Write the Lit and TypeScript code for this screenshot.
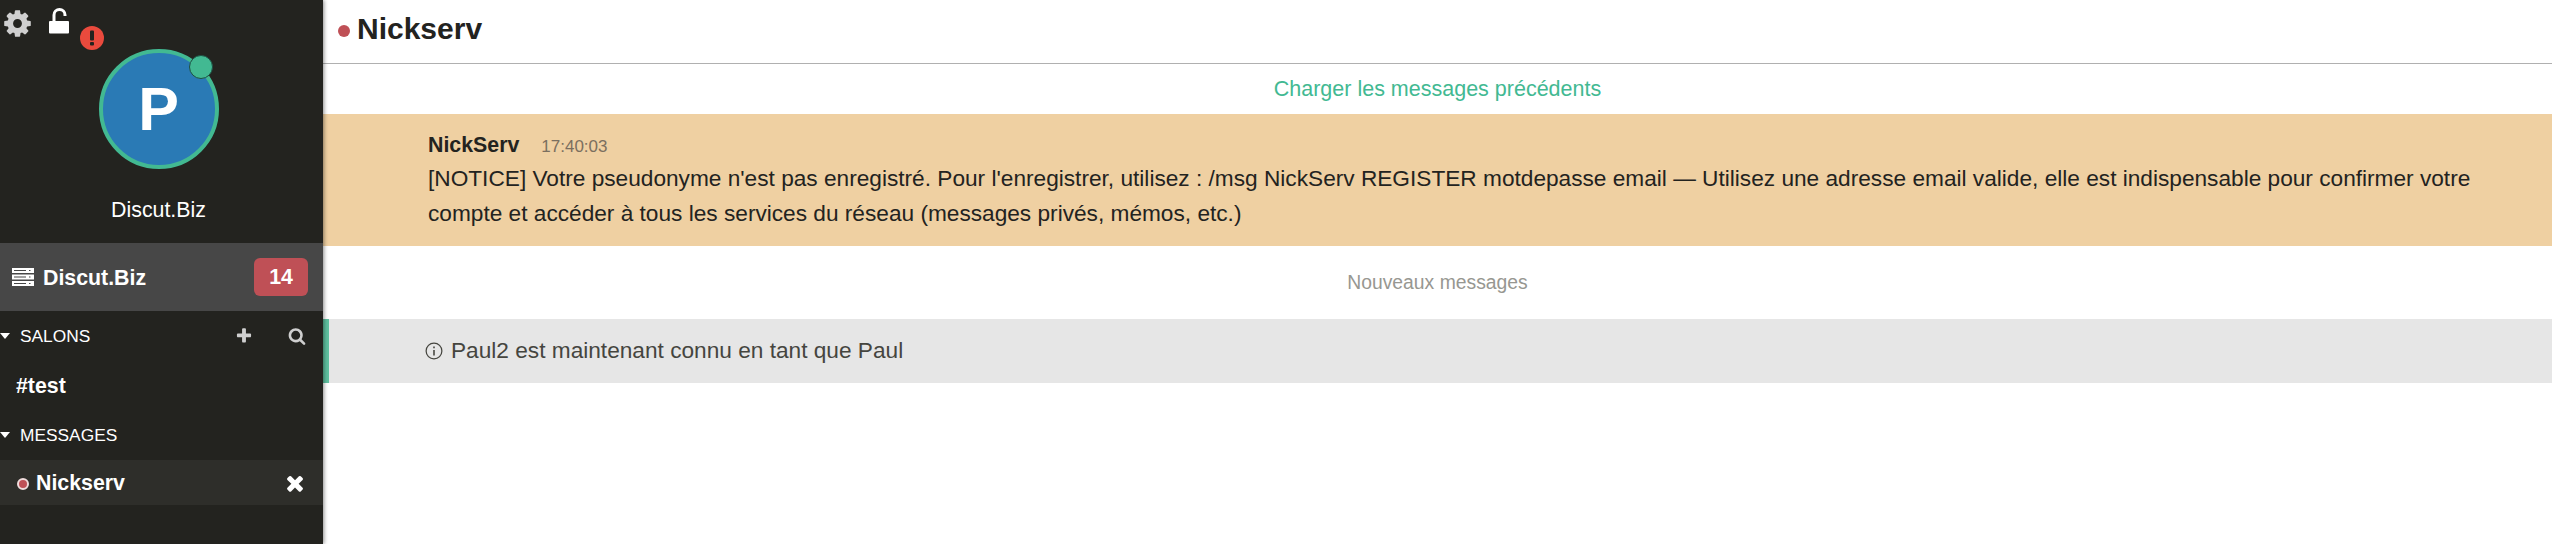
import { LitElement, html, css, svg } from 'lit';
import { customElement } from 'lit/decorators.js';

const GEAR = svg`<path d="M1152 896q0-106-75-181t-181-75-181 75-75 181 75 181 181 75 181-75 75-181zm512-109v222q0 12-8 23t-20 13l-185 28q-19 54-39 91 35 50 107 138 10 12 10 25t-9 23q-27 37-99 108t-94 71q-12 0-26-9l-138-108q-44 23-91 38-16 136-29 186-7 28-36 28h-222q-14 0-24.5-8.5t-11.5-21.5l-28-184q-49-16-90-37l-141 107q-10 9-25 9-14 0-25-11-126-114-165-168-7-10-7-23 0-12 8-23 15-21 51-66.5t54-70.5q-27-50-41-99l-183-27q-13-2-21-12.5t-8-23.5v-222q0-12 8-23t19-13l186-28q14-46 39-92-40-57-107-138-10-12-10-24 0-10 9-23 26-36 98.5-107.5t94.5-71.5q13 0 26 10l138 107q44-23 91-38 16-136 29-186 7-28 36-28h222q14 0 24.5 8.5t11.5 21.5l28 184q49 16 90 37l142-107q9-9 24-9 13 0 25 10 129 119 165 170 7 8 7 22 0 12-8 23-15 21-51 66.5t-54 70.5q26 50 41 98l183 28q13 2 21 12.5t8 23.5z"/>`;
const SEARCH = svg`<path d="M1216 832q0-185-131.5-316.5t-316.5-131.5-316.5 131.5-131.5 316.5 131.5 316.5 316.5 131.5 316.5-131.5 131.5-316.5zm512 832q0 52-38 90t-90 38q-54 0-90-38l-343-342q-179 124-399 124-143 0-273.5-55.5t-225-150-150-225-55.5-273.5 55.5-273.5 150-225 225-150 273.5-55.5 273.5 55.5 225 150 150 225 55.5 273.5q0 220-124 399l343 343q37 37 37 90z"/>`;
const PLUS = svg`<path d="M1600 736v192q0 40-28 68t-68 28h-416v416q0 40-28 68t-68 28h-192q-40 0-68-28t-28-68v-416h-416q-40 0-68-28t-28-68v-192q0-40 28-68t68-28h416v-416q0-40 28-68t68-28h192q40 0 68 28t28 68v416h416q40 0 68 28t28 68z"/>`;
const TIMES = svg`<path d="M1490 1322q0 40-28 68l-136 136q-28 28-68 28t-68-28l-294-294-294 294q-28 28-68 28t-68-28l-136-136q-28-28-28-68t28-68l294-294-294-294q-28-28-28-68t28-68l136-136q28-28 68-28t68 28l294 294 294-294q28-28 68-28t68 28l136 136q28 28 28 68t-28 68l-294 294 294 294q28 28 28 68z"/>`;

@customElement('app-root')
export class AppRoot extends LitElement {
  static override styles = css`
    :host {
      display: flex;
      width: 100%;
      height: 544px;
      overflow: hidden;
      font-family: 'Liberation Sans', Arial, sans-serif;
      font-size: 21.33px;
      color: #23231f;
      background: #fff;
    }

    svg {
      display: block;
      fill: currentColor;
    }

    .sidebar {
      position: relative;
      flex: 0 0 323px;
      height: 544px;
      background: #23231f;
      color: #fff;
      box-shadow: 1px 0 4px rgba(0, 0, 0, 0.45);
      z-index: 2;
    }

    .tools {
      position: absolute;
      inset: 0 auto auto 0;
    }

    .gear {
      position: absolute;
      left: 2px;
      top: 8px;
      width: 31px;
      height: 31px;
      color: #cfcfcf;
    }

    .lock {
      position: absolute;
      left: 49px;
      top: 8px;
      width: 20px;
      height: 26px;
    }

    .alert {
      position: absolute;
      left: 80px;
      top: 26px;
      width: 24px;
      height: 24px;
    }

    .user {
      height: 243px;
      display: flex;
      flex-direction: column;
      align-items: center;
      padding: 49px 6px 0 0;
      box-sizing: border-box;
    }

    .avatar {
      position: relative;
      width: 120px;
      height: 120px;
      box-sizing: border-box;
      border-radius: 50%;
      background: #2a7ab5;
      border: 4px solid #42b992;
      display: flex;
      align-items: center;
      justify-content: center;
      font-size: 61px;
      font-weight: 700;
    }

    .status {
      position: absolute;
      top: 2px;
      right: 2px;
      width: 24px;
      height: 24px;
      box-sizing: border-box;
      border-radius: 50%;
      background: #42b992;
      border: 1px solid #1e4f42;
    }

    .nick {
      margin-top: 29px;
      line-height: 25px;
    }

    .server {
      height: 68px;
      background: #474747;
      display: flex;
      align-items: center;
      padding: 0 15px 0 12px;
      font-weight: 700;
    }

    .server svg {
      width: 22px;
      height: 18px;
      margin-right: 9px;
    }

    .server-name {
      padding-top: 2px;
    }

    .badge {
      margin-left: auto;
      width: 54px;
      height: 38px;
      border-radius: 6px;
      background: #bf5056;
      display: flex;
      align-items: center;
      justify-content: center;
    }

    .section {
      display: flex;
      align-items: center;
      font-size: 17.33px;
      height: 50px;
    }

    .caret {
      width: 10px;
      height: 6px;
      margin-right: 10px;
    }

    .section-icon {
      width: 18px;
      height: 18px;
      color: #cfcfcf;
    }

    .section-actions {
      margin-left: auto;
      display: flex;
      gap: 35px;
      padding-right: 17px;
    }

    .room {
      height: 49px;
      box-sizing: border-box;
      display: flex;
      align-items: center;
      padding: 2px 0 0 16px;
      font-weight: 700;
    }

    .query {
      height: 45px;
      box-sizing: border-box;
      display: flex;
      align-items: center;
      padding: 0 16px 0 17px;
      background: #2e2e2a;
      font-weight: 700;
    }

    .query-name {
      padding-top: 1px;
    }

    .query-dot {
      flex: none;
      width: 12px;
      height: 12px;
      box-sizing: border-box;
      border: 2px solid #f0dcdc;
      border-radius: 50%;
      background: #bf5056;
      margin: 3px 7px 0 0;
    }

    .query svg {
      margin-left: auto;
      width: 24px;
      height: 24px;
    }

    .main {
      flex: 1;
      min-width: 0;
      display: flex;
      flex-direction: column;
    }

    .title {
      height: 63px;
      flex: none;
      box-sizing: border-box;
      display: flex;
      align-items: center;
      padding: 0 0 5px 15px;
      font-size: 30px;
      font-weight: 700;
    }

    .rule {
      height: 1px;
      flex: none;
      background: #b0b0b0;
    }

    .title-dot {
      width: 12px;
      height: 12px;
      border-radius: 50%;
      background: #bf5056;
      margin: 4px 7px 0 0;
    }

    .load {
      height: 50px;
      flex: none;
      display: flex;
      align-items: center;
      justify-content: center;
      color: #42b992;
      font-size: 21.5px;
    }

    .notice {
      height: 132px;
      flex: none;
      box-sizing: border-box;
      padding: 17px 20px 0 105px;
      background: #efd0a2;
    }

    .msg-head {
      display: flex;
      align-items: baseline;
      gap: 22px;
      line-height: 28px;
    }

    .msg-nick {
      font-weight: 700;
    }

    .msg-time {
      font-size: 17px;
      color: #7b6f5f;
    }

    .msg-text {
      font-size: 22.67px;
      line-height: 34.5px;
    }

    .divider {
      height: 73px;
      flex: none;
      display: flex;
      align-items: center;
      justify-content: center;
      font-size: 19.33px;
      color: #979791;
    }

    .event {
      height: 64px;
      flex: none;
      box-sizing: border-box;
      border-left: 6px solid #5fc0a0;
      background: #e6e6e6;
      display: flex;
      align-items: center;
      padding: 0 0 1px 96px;
      font-size: 22.67px;
      color: #45453f;
    }

    .event svg {
      width: 18px;
      height: 18px;
      margin-right: 8px;
      fill: none;
      stroke: currentColor;
    }
  `;

  override render() {
    return html`
      <aside class="sidebar">
        <div class="tools">
          <svg class="gear" viewBox="0 0 1792 1792">${GEAR}</svg>
          <svg class="lock" viewBox="0 0 20 26">
            <path d="M5 14V7a5.5 5.5 0 0 1 11 0v1" fill="none" stroke="currentColor" stroke-width="3" />
            <rect x="0" y="13" width="20" height="12.5" rx="1" />
          </svg>
          <svg class="alert" viewBox="0 0 24 24">
            <circle cx="12" cy="12" r="12" fill="#ea4a3d" />
            <rect x="10" y="4.5" width="4" height="10" rx="1" fill="#23231f" />
            <rect x="10" y="16" width="4" height="3.6" rx="1" fill="#23231f" />
          </svg>
        </div>
        <div class="user">
          <div class="avatar">P<span class="status"></span></div>
          <div class="nick">Discut.Biz</div>
        </div>
        <div class="server">
          <svg viewBox="0 0 22 18">
            <path d="M0 0h22v5H0zM0 6.5h22v5H0zM0 13h22v5H0z" />
            <path d="M2 2h12v1H2zM2 8.5h12v1H2zM2 15h12v1H2zM17 2h1.5v1H17zM17 8.5h1.5v1H17zM17 15h1.5v1H17z" fill="#474747" />
          </svg>
          <span class="server-name">Discut.Biz</span>
          <span class="badge">14</span>
        </div>
        <div class="section">
          <svg class="caret" viewBox="0 0 10 6"><path d="M0 0h10L5 6z" /></svg>
          SALONS
          <div class="section-actions">
            <svg class="section-icon" viewBox="0 0 1792 1792">${PLUS}</svg>
            <svg class="section-icon" viewBox="0 0 1792 1792">${SEARCH}</svg>
          </div>
        </div>
        <div class="room">#test</div>
        <div class="section">
          <svg class="caret" viewBox="0 0 10 6"><path d="M0 0h10L5 6z" /></svg>
          MESSAGES
        </div>
        <div class="query">
          <span class="query-dot"></span>
          <span class="query-name">Nickserv</span>
          <svg viewBox="0 0 1792 1792">${TIMES}</svg>
        </div>
      </aside>
      <main class="main">
        <header class="title"><span class="title-dot"></span>Nickserv</header>
        <div class="rule"></div>
        <div class="load">Charger les messages précédents</div>
        <div class="notice">
          <div class="msg-head">
            <span class="msg-nick">NickServ</span>
            <span class="msg-time">17:40:03</span>
          </div>
          <div class="msg-text">
            [NOTICE] Votre pseudonyme n'est pas enregistré. Pour l'enregistrer, utilisez : /msg NickServ REGISTER motdepasse email — Utilisez une adresse email valide, elle est indispensable pour confirmer votre compte et accéder à tous les services du réseau (messages privés, mémos, etc.)
          </div>
        </div>
        <div class="divider">Nouveaux messages</div>
        <div class="event">
          <svg viewBox="0 0 16 16">
            <circle cx="8" cy="8" r="7" stroke-width="1.1" />
            <path d="M8 7v5" stroke-width="1.4" />
            <path d="M8 4v1.6" stroke-width="1.4" />
          </svg>
          Paul2 est maintenant connu en tant que Paul
        </div>
      </main>
    `;
  }
}
